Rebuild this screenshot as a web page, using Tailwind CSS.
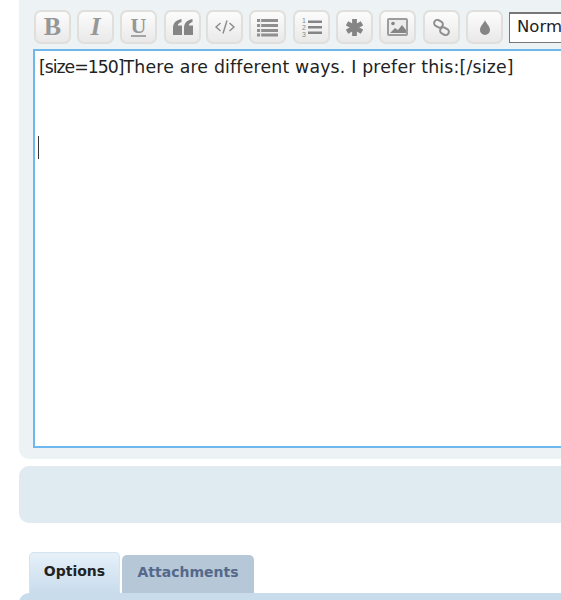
<!DOCTYPE html>
<html lang="en">
  <head>
    <meta charset="UTF-8" />
    <title>Editor</title>
    <script src="https://cdn.jsdelivr.net/npm/@tailwindcss/browser@4"></script>
  </head>
  <body class="bg-white overflow-hidden h-[600px] font-['DejaVu_Sans',sans-serif]">
    <div class="w-[700px] h-[600px] overflow-hidden pl-[19px]">
      <!-- editor panel -->
      <div class="bg-[#edf2f5] rounded-b-[10px] h-[459px] pl-[15px] pt-[10px]">
        <div class="flex items-center h-[34px]">
          <button class="w-[37px] h-[34px] mr-[6px] flex items-center justify-center rounded-[7px] border-2 border-[#e0dfdc] bg-gradient-to-b from-[#fcfcfc] to-[#e9e9e9] text-[#979797] font-bold text-[26px] leading-none font-['Liberation_Serif',serif]">B</button>
          <button class="w-[37px] h-[34px] mr-[6px] flex items-center justify-center rounded-[7px] border-2 border-[#e0dfdc] bg-gradient-to-b from-[#fcfcfc] to-[#e9e9e9] text-[#979797] italic font-bold text-[26px] leading-none font-['Liberation_Serif',serif]">I</button>
          <button class="w-[37px] h-[34px] mr-[7px] flex flex-col items-center justify-center rounded-[7px] border-2 border-[#e0dfdc] bg-gradient-to-b from-[#fcfcfc] to-[#e9e9e9] text-[#979797] font-bold text-[22px] leading-[16px] font-['Liberation_Serif',serif]">
            <span>U</span>
            <span class="w-[15px] h-[2px] mt-[1px] bg-[#a5a5a5]"></span>
          </button>
          <button class="w-[37px] h-[34px] mr-[5px] flex items-center justify-center rounded-[7px] border-2 border-[#e0dfdc] bg-gradient-to-b from-[#fcfcfc] to-[#e9e9e9]">
            <svg width="20" height="16" viewBox="0 0 20 16" fill="#858585"><path d="M0 9.500C0 4 3 1 8.500 0v3C6 3.800 5 5 4.800 6.500H9V16H0zM11 9.500C11 4 14 1 19.500 0v3C17 3.800 16 5 15.800 6.500H20V16h-9z"/></svg>
          </button>
          <button class="w-[37px] h-[34px] mr-[6px] flex items-center justify-center rounded-[7px] border-2 border-[#e0dfdc] bg-gradient-to-b from-[#fcfcfc] to-[#e9e9e9]">
            <svg width="20" height="14" viewBox="0 0 20 14" fill="none" stroke="#8a8a8a" stroke-width="1.400"><path d="M5.500 3 1 7l4.500 4M14.500 3 19 7l-4.500 4M12 .5 8 13.500"/></svg>
          </button>
          <button class="w-[37px] h-[34px] mr-[7px] flex items-center justify-center rounded-[7px] border-2 border-[#e0dfdc] bg-gradient-to-b from-[#fcfcfc] to-[#e9e9e9]">
            <svg width="21" height="19" viewBox="0 0 21 19" fill="#8f8f8f"><path d="M0 1h21v3H0zM0 6h21v3H0zM0 11h21v3H0zM0 15.500h21v3H0z"/><path d="M3 0h1.200v19H3z" fill="#e8e8e8"/></svg>
          </button>
          <button class="w-[37px] h-[34px] mr-[6px] flex items-center justify-center rounded-[7px] border-2 border-[#e0dfdc] bg-gradient-to-b from-[#fcfcfc] to-[#e9e9e9]">
            <svg width="20" height="20" viewBox="0 0 20 20"><path d="M6 3.500h14v2.400H6zM6 9h14v2.400H6zM6 14.500h14v2.400H6z" fill="#858585"/><text x="0" y="6" font-size="7" fill="#8a8a8a" font-family="Liberation Sans">1</text><text x="0" y="12.500" font-size="7" fill="#8a8a8a" font-family="Liberation Sans">2</text><text x="0" y="19.500" font-size="7" fill="#8a8a8a" font-family="Liberation Sans">3</text></svg>
          </button>
          <button class="w-[37px] h-[34px] mr-[6px] flex items-center justify-center rounded-[7px] border-2 border-[#e0dfdc] bg-gradient-to-b from-[#fcfcfc] to-[#e9e9e9]">
            <svg width="17" height="17" viewBox="0 0 16 16" stroke="#858585" stroke-width="4.500"><path d="M8 0v16M1 4l14 8M15 4 1 12"/></svg>
          </button>
          <button class="w-[37px] h-[34px] mr-[7px] flex items-center justify-center rounded-[7px] border-2 border-[#e0dfdc] bg-gradient-to-b from-[#fcfcfc] to-[#e9e9e9]">
            <svg width="21" height="18" viewBox="0 0 21 18"><rect x="1" y="1" width="19" height="16" rx="1" fill="#ececec" stroke="#9c9c9c" stroke-width="2"/><circle cx="6" cy="5.500" r="1.800" fill="#858585"/><path d="M3 15l5-5 3 2 4-5 4 5v3z" fill="#858585"/></svg>
          </button>
          <button class="w-[37px] h-[34px] mr-[6px] flex items-center justify-center rounded-[7px] border-2 border-[#e0dfdc] bg-gradient-to-b from-[#fcfcfc] to-[#e9e9e9]">
            <svg width="17" height="17" viewBox="0 0 17 17" fill="none" stroke="#8f8f8f" stroke-width="2"><rect x="1" y="1.500" width="9" height="6.500" rx="3.200" transform="rotate(30 5.500 4.750)"/><rect x="7" y="9" width="9" height="6.500" rx="3.200" transform="rotate(30 11.500 12.250)"/></svg>
          </button>
          <button class="w-[37px] h-[34px] mr-[6px] flex items-center justify-center rounded-[7px] border-2 border-[#e0dfdc] bg-gradient-to-b from-[#fcfcfc] to-[#e9e9e9]">
            <svg width="10" height="15" viewBox="0 0 10 15" fill="#858585"><path d="M5 0c.8 3 5 6 5 10a5 5 0 0 1-10 0C0 6 4.200 3 5 0z"/></svg>
          </button>
          <div class="w-[120px] h-[31px] pl-[7px] flex items-center bg-white border border-t-2 border-[#777] text-[16.500px] text-[#222]">Normal</div>
        </div>
        <!-- textarea -->
        <div class="mt-[5px] -ml-px h-[399px] bg-white border-2 border-[#6fb8ee] pl-[4px] pt-[4px] text-[17.300px] leading-[24px] text-[#222]">
          <div class="whitespace-nowrap tracking-[0.2px]"><span class="tracking-[-1px]">[size=150]</span>There are different ways. I prefer this:[/size]</div>
          <div class="mt-[57px] -ml-px w-px h-[23px] bg-[#333]"></div>
        </div>
      </div>
      <!-- preview bar -->
      <div class="mt-[7px] h-[57px] bg-[#e0eaf1] rounded-[10px]"></div>
      <!-- tabs -->
      <div class="mt-[29px] pl-[10px] flex items-end gap-[2px] h-[41px]">
        <div class="w-[91px] h-[41px] pt-[8px] text-center rounded-t-[5px] border border-b-0 border-[#d3e3f1] bg-gradient-to-b from-[#e6f0f9] to-[#c9dcec] text-[14px] font-bold text-[#222]">Options</div>
        <div class="w-[132px] h-[38px] pt-[7px] text-center rounded-t-[5px] bg-[#b6c8d8] text-[14px] font-bold text-[#55688a]">Attachments</div>
      </div>
      <div class="h-[40px] bg-[#c9dcec] rounded-t-[10px]"></div>
    </div>
  </body>
</html>
